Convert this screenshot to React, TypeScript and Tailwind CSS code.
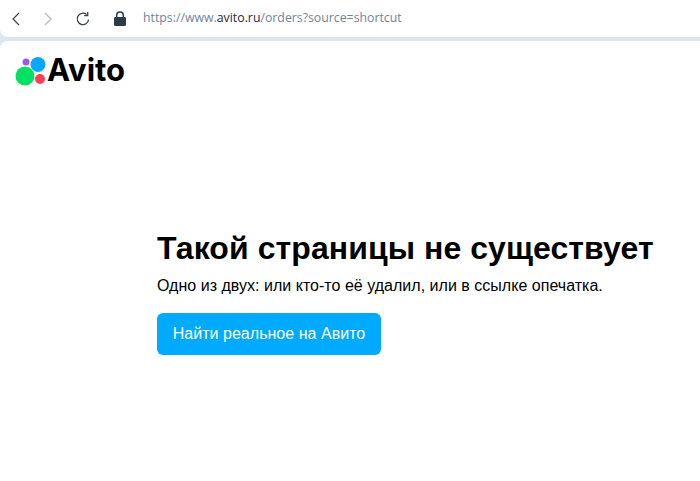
export default function App() {
  return (
    <div className="h-[481px] w-[700px] overflow-hidden bg-[#dee6ee] font-['Liberation_Sans',sans-serif]">
      <div className="flex h-[37px] items-center rounded-bl-[8px] bg-white">
        <svg className="ml-[10px] h-[16px] w-[12px]" viewBox="0 0 12 16" fill="none" stroke="#3a424c" strokeWidth="1.2">
          <path d="M9 2 3 8l6 6" />
        </svg>
        <svg className="ml-[20px] h-[16px] w-[12px]" viewBox="0 0 12 16" fill="none" stroke="#b4bac1" strokeWidth="1.2">
          <path d="m3 2 6 6-6 6" />
        </svg>
        <svg className="ml-[21px] h-[16px] w-[16px]" viewBox="0 0 16 16" fill="none" stroke="#3a424c" strokeWidth="1.3">
          <path d="M13.6 8.6A5.7 5.7 0 1 1 11.6 3.500" />
          <path d="M12.700 1v3.600H9.200" />
        </svg>
        <svg className="ml-[22px] h-[16px] w-[14px]" viewBox="0 0 14 16">
          <path d="M1 7.500C1 6.700 1.600 6 2.500 6h9c.9 0 1.500.7 1.500 1.500v6c0 .8-.6 1.500-1.500 1.500h-9C1.600 15 1 14.300 1 13.500z" fill="#2d3a4a" />
          <path d="M3.700 6.500V4.400a3.300 3.300 0 0 1 6.600 0v2.100" fill="none" stroke="#2d3a4a" strokeWidth="1.500" />
        </svg>
        <div className="ml-[16px] mt-[-1px] font-['Open_Sans',sans-serif] text-[12.3px] text-[#71859b]">
          https://www.<span className="text-[#1f2a36]">avito.ru</span>/orders?source=shortcut
        </div>
      </div>
      <div className="mt-[4px] h-[440px] rounded-tl-[8px] bg-white">
        <div className="flex items-center pl-[15px] pt-[14px]">
          <svg className="h-[32px] w-[32px]" viewBox="0 0 32 32">
            <circle cx="10" cy="21" r="9.500" fill="#04e061" />
            <circle cx="23" cy="9.500" r="7.500" fill="#0aa6ff" />
            <circle cx="25" cy="24" r="5" fill="#ff4053" />
            <circle cx="11" cy="7" r="3.500" fill="#965eeb" />
          </svg>
          <span className="mt-[-2px] font-['Inter',sans-serif] text-[31px] leading-[32px] font-bold text-black">Avito</span>
        </div>
        <main className="pl-[157px] pt-[141px]">
          <h1 className="text-[32px] leading-[40px] font-bold tracking-[0.07px] text-black">Такой страницы не существует</h1>
          <p className="mt-[7px] text-[16px] leading-[22px] tracking-[0.02px] text-black">Одно из двух: или кто-то её удалил, или в ссылке опечатка.</p>
          <button className="mt-[16px] flex h-[42px] w-[224px] items-center justify-center rounded-[6px] bg-[#00aaff] text-[16px] tracking-[0.03px] text-white">Найти реальное на Авито</button>
        </main>
      </div>
    </div>
  );
}
